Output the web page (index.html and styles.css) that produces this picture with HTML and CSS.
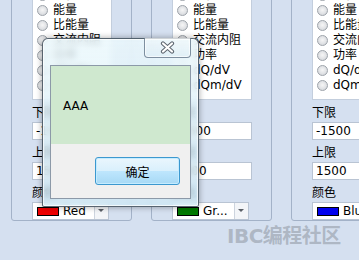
FILE: index.html
```html
<!DOCTYPE html>
<html>
<head>
	<meta charset="utf-8">
	<title>Curve settings</title>
	<link rel="stylesheet" href="styles.css">
</head>
<body>
	<div class="page">

		<!-- Curve groups -->
		<div class="groups">
			<div class="group">
				<div class="list">
					<div class="radio"><span class="dot"></span>比容量</div>
					<div class="radio"><span class="dot"></span>能量</div>
					<div class="radio"><span class="dot"></span>比能量</div>
					<div class="radio"><span class="dot"></span>交流内阻</div>
					<div class="radio"><span class="dot"></span>功率</div>
					<div class="radio"><span class="dot"></span>dQ/dV</div>
					<div class="radio"><span class="dot"></span>dQm/dV</div>
				</div>
				<div class="label">下限</div>
				<div class="field">-1500</div>
				<div class="label">上限</div>
				<div class="field">1500</div>
				<div class="label">颜色</div>
				<div class="combo">
					<span class="swatch red"></span>
					<span class="name">Red</span>
					<span class="drop"></span>
				</div>
			</div>

			<div class="group">
				<div class="list">
					<div class="radio"><span class="dot"></span>比容量</div>
					<div class="radio"><span class="dot"></span>能量</div>
					<div class="radio"><span class="dot"></span>比能量</div>
					<div class="radio"><span class="dot"></span>交流内阻</div>
					<div class="radio"><span class="dot"></span>功率</div>
					<div class="radio"><span class="dot"></span>dQ/dV</div>
					<div class="radio"><span class="dot"></span>dQm/dV</div>
				</div>
				<div class="label">下限</div>
				<div class="field">-1500</div>
				<div class="label">上限</div>
				<div class="field">1500</div>
				<div class="label">颜色</div>
				<div class="combo">
					<span class="swatch green"></span>
					<span class="name">Gr...</span>
					<span class="drop"></span>
				</div>
			</div>

			<div class="group">
				<div class="list">
					<div class="radio"><span class="dot"></span>比容量</div>
					<div class="radio"><span class="dot"></span>能量</div>
					<div class="radio"><span class="dot"></span>比能量</div>
					<div class="radio"><span class="dot"></span>交流内阻</div>
					<div class="radio"><span class="dot"></span>功率</div>
					<div class="radio"><span class="dot"></span>dQ/dV</div>
					<div class="radio"><span class="dot"></span>dQm/dV</div>
				</div>
				<div class="label">下限</div>
				<div class="field">-1500</div>
				<div class="label">上限</div>
				<div class="field">1500</div>
				<div class="label">颜色</div>
				<div class="combo">
					<span class="swatch blue"></span>
					<span class="name">Blue</span>
					<span class="drop"></span>
				</div>
			</div>
		</div>

		<!-- Message box -->
		<div class="dialog">
			<div class="titlebar">
				<div class="close">
					<svg width="15" height="13" viewBox="0 0 15 13">
						<path d="M3 2.5 L12 10.5 M12 2.5 L3 10.5" stroke="#5d6670" stroke-width="4.2" stroke-linecap="round" fill="none"/>
						<path d="M3 2.5 L12 10.5 M12 2.5 L3 10.5" stroke="#ffffff" stroke-width="2.2" stroke-linecap="round" fill="none"/>
					</svg>
				</div>
			</div>
			<div class="client">
				<div class="msg">AAA</div>
				<div class="actions">
					<button class="ok">确定</button>
				</div>
			</div>
		</div>

		<div class="mark">IBC编程社区</div>
	</div>
</body>
</html>
```

FILE: styles.css
```css
* {
	box-sizing: border-box;
}

body {
	margin: 0;
	background-color: #d5e0f0;
	font-family: "DejaVu Sans", "Noto Sans CJK SC", sans-serif;
	font-size: 11px;
	color: #000;
	overflow: hidden;
}

.page {
	position: relative;
	width: 359px;
	height: 260px;
	overflow: hidden;
}

/* Groups */
.groups {
	display: flex;
	gap: 19px;
	margin-left: 11px;
	margin-top: -20px;
}

.group {
	flex: none;
	width: 121px;
	border: 1px solid #a3b2c8;
	border-radius: 3px;
	padding-left: 20px;
}

.list {
	width: 80px;
	margin-top: 3px;
	padding: 3px 0 6px 0;
	background-color: #fff;
	border: 1px solid #c3cedd;
	white-space: nowrap;
	overflow: hidden;
}

.radio {
	display: flex;
	align-items: center;
	height: 15px;
	line-height: 15px;
	font-size: 12px;
}

.dot {
	flex: none;
	width: 11px;
	height: 11px;
	margin: 0 5px 0 4px;
	border: 1px solid #9da3aa;
	border-radius: 50%;
	background: radial-gradient(circle at 50% 45%, #f6f6f6 0, #e0e2e5 55%, #c9ccd0 100%);
}

.label {
	margin-top: 6px;
	height: 14px;
	line-height: 14px;
	font-size: 12px;
}

.field {
	width: 80px;
	height: 18px;
	margin-top: 2px;
	padding-left: 3px;
	line-height: 16px;
	font-size: 12px;
	background-color: #fff;
	border: 1px solid #b9c4d3;
}

.combo {
	display: flex;
	align-items: center;
	width: 77px;
	height: 18px;
	margin-top: 2px;
	background-color: #fff;
	border: 1px solid #b9c4d3;
	font-size: 12px;
	white-space: nowrap;
}

.swatch {
	flex: none;
	width: 22px;
	height: 9px;
	margin: 0 4px 0 4px;
	border: 1px solid #000;
}

.red { background-color: #ee0000; }
.green { background-color: #007a00; }
.blue { background-color: #0000ee; }

.name {
	flex: 1;
	overflow: hidden;
}

.drop {
	flex: none;
	position: relative;
	width: 14px;
	height: 100%;
	background-color: #f3f5f8;
	border-left: 1px solid #cdd4de;
}

.drop::after {
	content: "";
	position: absolute;
	left: 3px;
	top: 6px;
	border-left: 3px solid transparent;
	border-right: 3px solid transparent;
	border-top: 3px solid #5a5f66;
}

/* Dialog */
.dialog {
	position: absolute;
	left: 42px;
	top: 38px;
	width: 157px;
	padding: 0 7px 7px 7px;
	border: 1px solid rgba(40, 52, 66, 0.75);
	border-radius: 6px 6px 2px 2px;
	background: linear-gradient(to bottom, rgba(235, 248, 252, 0.82), rgba(205, 232, 244, 0.7));
	backdrop-filter: blur(3px);
	box-shadow: 0 0 6px rgba(0, 0, 0, 0.35), inset 0 0 0 1px rgba(255, 255, 255, 0.7);
}

.titlebar {
	display: flex;
	justify-content: flex-end;
	height: 26px;
}

.close {
	display: flex;
	justify-content: center;
	align-items: center;
	width: 47px;
	height: 20px;
	margin-top: -1px;
	border: 1px solid rgba(90, 110, 130, 0.75);
	border-top: none;
	border-radius: 0 0 4px 4px;
	background: linear-gradient(to bottom, rgba(255, 255, 255, 0.3), rgba(220, 236, 244, 0.6));
	box-shadow: inset 0 0 0 1px rgba(255, 255, 255, 0.6);
}

.client {
	border: 1px solid #8c99a8;
	background-color: #f0f0f0;
}

.msg {
	height: 78px;
	padding: 33px 0 0 12px;
	line-height: 14px;
	font-size: 12px;
	background-color: #cfe8cf;
}

.actions {
	display: flex;
	justify-content: flex-end;
	height: 54px;
	padding: 13px 10px 0 0;
}

.ok {
	width: 85px;
	height: 28px;
	padding: 0;
	font-family: "Noto Sans CJK SC", sans-serif;
	font-size: 12px;
	color: #000;
	border: 1px solid #3c98cf;
	border-radius: 3px;
	background: linear-gradient(to bottom, #eaf6fd 0, #d9f0fc 50%, #bee6fd 51%, #a7d9f5 100%);
	box-shadow: inset 0 0 0 1px #c5ecff;
}

/* Watermark */
.mark {
	position: absolute;
	left: 227px;
	top: 224px;
	font-family: "DejaVu Sans", "Noto Sans CJK SC", sans-serif;
	font-size: 20px;
	font-weight: bold;
	line-height: 24px;
	letter-spacing: -0.5px;
	color: rgba(140, 148, 158, 0.55);
}
```
